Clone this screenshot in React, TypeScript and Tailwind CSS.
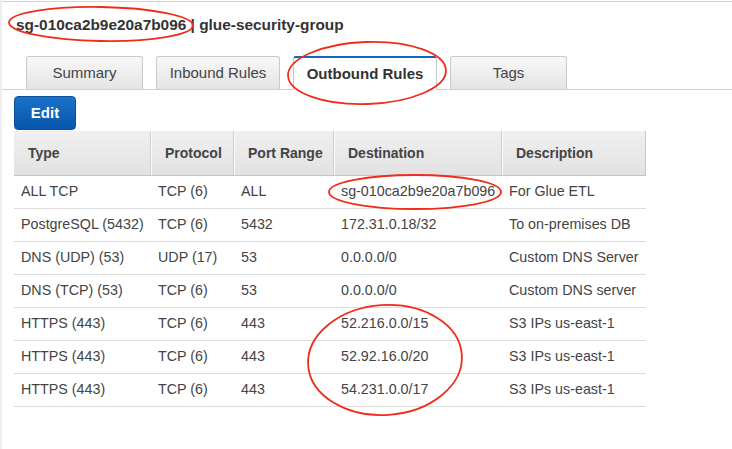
import React from "react";

const rows = [
  ["ALL TCP", "TCP (6)", "ALL", "sg-010ca2b9e20a7b096", "For Glue ETL"],
  ["PostgreSQL (5432)", "TCP (6)", "5432", "172.31.0.18/32", "To on-premises DB"],
  ["DNS (UDP) (53)", "UDP (17)", "53", "0.0.0.0/0", "Custom DNS Server"],
  ["DNS (TCP) (53)", "TCP (6)", "53", "0.0.0.0/0", "Custom DNS server"],
  ["HTTPS (443)", "TCP (6)", "443", "52.216.0.0/15", "S3 IPs us-east-1"],
  ["HTTPS (443)", "TCP (6)", "443", "52.92.16.0/20", "S3 IPs us-east-1"],
  ["HTTPS (443)", "TCP (6)", "443", "54.231.0.0/17", "S3 IPs us-east-1"],
];

const headers = ["Type", "Protocol", "Port Range", "Destination", "Description"];

function Tab({ label, w, active }: { label: string; w: string; active?: boolean }) {
  if (active) {
    return (
      <div
        className={`${w} h-[34px] -mb-px flex items-center justify-center bg-white border border-[#c8c8c8] border-t-2 border-t-[#1166bb] border-b-0 rounded-t-[3px] text-[15px] font-bold text-[#333]`}
      >
        {label}
      </div>
    );
  }
  return (
    <div
      className={`${w} h-[33px] flex items-center justify-center bg-gradient-to-b from-[#f8f8f8] to-[#e4e4e4] border border-[#cacaca] border-b-0 rounded-t-[3px] text-[15px] text-[#444]`}
    >
      {label}
    </div>
  );
}

export default function App() {
  return (
    <div
      className="relative w-[732px] h-[449px] bg-white border-l-2 border-[#efefef] overflow-hidden"
      style={{ fontFamily: '"Liberation Sans", Arial, sans-serif' }}
    >
      <div className="h-px mt-px bg-[#d2d2d2]" />
      <div className="pl-[14px] pt-[13px] h-[20px] box-content text-[15.4px] leading-[20px] font-bold text-[#333]">
        sg-010ca2b9e20a7b096 | glue-security-group
      </div>
      <div className="mt-[21px] flex items-end gap-[13px] pl-[24px] border-b border-[#cfcfcf]">
        <Tab label="Summary" w="w-[117px]" />
        <Tab label="Inbound Rules" w="w-[124px]" />
        <Tab label="Outbound Rules" w="w-[144px]" active />
        <Tab label="Tags" w="w-[117px]" />
      </div>
      <div className="pl-[12px] pt-[6px]">
        <div className="w-[62px] h-[34px] flex items-center justify-center rounded-[4px] bg-gradient-to-b from-[#1b72c8] to-[#0656ab] border border-[#0b4f99] text-white font-bold text-[15px]">
          Edit
        </div>
        <div className="w-[632px] mt-px">
          <div className="grid grid-cols-[137px_83px_100px_168px_144px] h-[45px] bg-gradient-to-b from-[#f0f0f0] to-[#e2e2e2] border-b border-[#c4c4c4] border-r border-r-[#c8c8c8]">
            {headers.map((h, i) => (
              <div
                key={h}
                className={`flex items-center pl-[14px] text-[14px] font-bold text-[#444] ${
                  i < headers.length - 1 ? "border-r border-[#cfcfcf] shadow-[1px_0_0_#fafafa]" : ""
                }`}
              >
                {h}
              </div>
            ))}
          </div>
          {rows.map((r, ri) => (
            <div
              key={ri}
              className="grid grid-cols-[137px_83px_100px_168px_144px] h-[33px] border-b border-[#dcdcdc]"
            >
              {r.map((c, ci) => (
                <div key={ci} className="flex items-center pl-[7px] text-[14.3px] text-[#444] whitespace-nowrap">
                  {c}
                </div>
              ))}
            </div>
          ))}
        </div>
      </div>
      <svg className="absolute left-[-2px] top-0 pointer-events-none" width="732" height="449">
        <g fill="none" stroke="#ee2d1b" strokeWidth="1.8">
          <ellipse cx="101" cy="24" rx="92" ry="17" transform="rotate(1 101 24)" />
          <ellipse cx="367" cy="73" rx="79" ry="31" transform="rotate(-2 367 73)" />
          <ellipse cx="415" cy="192" rx="86" ry="17" />
          <ellipse cx="385" cy="360" rx="77" ry="55" transform="rotate(-4 385 360)" />
        </g>
      </svg>
    </div>
  );
}
